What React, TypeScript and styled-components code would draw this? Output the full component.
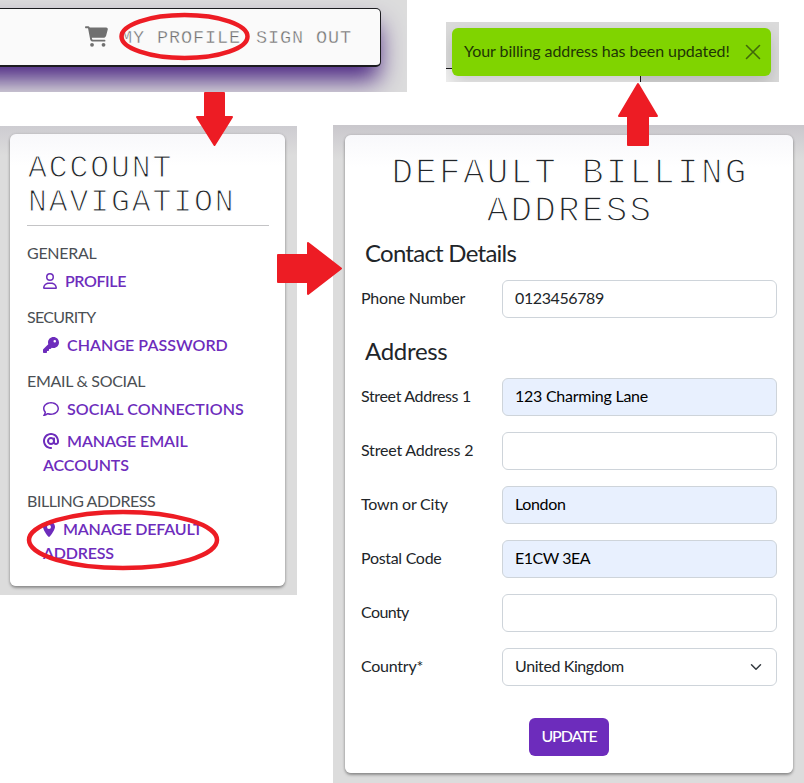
import React from "react";
import styled, { createGlobalStyle } from "styled-components";
import {
  FaAt,
  FaCartShopping,
  FaKey,
  FaLocationDot,
  FaRegComment,
  FaRegUser,
} from "react-icons/fa6";

const GlobalStyle = createGlobalStyle`
  * { box-sizing: border-box; }
  body {
    margin: 0;
    background: #fff;
    color: #212529;
    font: 400 16px/24px Lato, "Liberation Sans", sans-serif;
  }
  h1, h2, h3, p, ul { margin: 0; padding: 0; font-weight: 400; }
  ul { list-style: none; }
`;

const red = "#ed1c24";
const purple = "#6d2cbc";

const Page = styled.main`
  position: relative;
  width: 804px;
  height: 783px;
  overflow: hidden;
`;

const TopRow = styled.div`
  display: flex;
  gap: 39px;
  height: 92px;
`;

const BottomRow = styled.div`
  display: flex;
  align-items: flex-start;
  gap: 36px;
  padding-top: 33px;
`;

const HeaderPanel = styled.header`
  width: 407px;
  height: 92px;
  padding-top: 8px;
  background: #dcdcdc;
  overflow: hidden;
`;

const NavBar = styled.nav`
  display: flex;
  align-items: center;
  justify-content: flex-end;
  width: 421px;
  height: 59px;
  margin-left: -40px;
  padding-right: 28px;
  color: #707070;
  background: #fafafa;
  border: 1px solid #1c1c20;
  border-width: 1px 1px 2px 0;
  border-radius: 0 5px 5px 0;
  box-shadow: 0 15px 24px -2px #4b2683;
`;

const CartIcon = styled(FaCartShopping)`
  width: 23px;
  height: 21px;
  margin: 0 13px 2px 0;
`;

const NavLink = styled.a`
  padding-top: 4px;
  font: 18.5px/24px "Liberation Mono", monospace;
  letter-spacing: 0.9px;
  -webkit-text-stroke: 0.4px #fafafa;
  & + & { margin-left: 15px; }
`;

const ToastPanel = styled.div`
  width: 333px;
  height: 60px;
  margin-top: 22px;
  padding: 6px;
  overflow: hidden;
  background:
    linear-gradient(#18181b, #18181b) 0 46px / 194px 1px no-repeat,
    linear-gradient(#18181b, #18181b) 194px 46px / 1px 14px no-repeat,
    linear-gradient(#f1f1f1, #f1f1f1) 0 47px / 194px 13px no-repeat,
    #dadada;
`;

const Toast = styled.div`
  display: flex;
  align-items: center;
  justify-content: space-between;
  width: 319px;
  height: 48px;
  padding: 0 10px 0 12px;
  color: #203506;
  background: #80d400;
  border-radius: 6px;
  box-shadow: 0 8px 16px rgba(0, 0, 0, 0.15);
`;

const ToastText = styled.p`
  padding-bottom: 2px;
  white-space: nowrap;
  letter-spacing: -0.06px;
`;

const Sidebar = styled.aside`
  width: 297px;
  height: 469px;
  margin-top: 1px;
  padding: 8px 12px 9px 10px;
  background: linear-gradient(#cdccd1, #dcdcdc 30px);
`;

const Card = styled.section`
  height: 100%;
  border-radius: 6px;
  background: linear-gradient(#f8f8fb, #fff 32px);
  box-shadow: 0 2px 3px rgba(0, 0, 0, 0.34), 0 0 3px rgba(0, 0, 0, 0.12);
`;

const NavCard = styled(Card)`
  padding: 18px 16px 0 17px;
`;

const SidebarTitle = styled.h2`
  padding-left: 1px;
  font: 31.5px/34px "Liberation Mono", monospace;
  letter-spacing: 1.85px;
  white-space: nowrap;
  -webkit-text-stroke: 1.15px #fff;
`;

const Divider = styled.hr`
  height: 1px;
  margin: 5px 0 15px;
  border: 0;
  background: #c4c4c6;
`;

const Group = styled.section`
  margin-bottom: 8px;
`;

const GroupLabel = styled.h3<{ $track: number }>`
  color: #4b4f54;
  font-size: 16px;
  line-height: 24px;
  letter-spacing: ${(p) => p.$track}px;
`;

const GroupItem = styled.li<{ $track: number; $gap: number; $icon: number }>`
  padding: 4px 0 4px 16px;
  color: ${purple};
  font-weight: 600;
  letter-spacing: ${(p) => p.$track}px;
  svg {
    width: ${(p) => p.$icon}px;
    height: 16px;
    margin-right: ${(p) => p.$gap}px;
    vertical-align: -2px;
  }
`;

const FormPanel = styled.div`
  width: 471px;
  height: 658px;
  padding: 10px 11px 10px 12px;
  background: linear-gradient(#c9c7cc, #dcdcdc 34px);
`;

const FormCard = styled(Card)`
  display: flex;
  flex-direction: column;
  padding: 20px 16px 0;
`;

const FormTitle = styled.h1`
  padding-left: 2px;
  text-align: center;
  font: 36px/38px "Liberation Mono", monospace;
  letter-spacing: 2.2px;
  -webkit-text-stroke: 1.4px #fff;
`;

const SectionTitle = styled.h2<{ $top: number; $track: number }>`
  margin: ${(p) => p.$top}px 0 13px 4px;
  font-size: 24px;
  line-height: 29px;
  letter-spacing: ${(p) => p.$track}px;
`;

const Field = styled.label`
  display: grid;
  grid-template-columns: 141px 275px;
  align-items: center;
  height: 38px;
  margin-bottom: 16px;
`;

const FieldLabel = styled.span<{ $track: number }>`
  padding-bottom: 2px;
  letter-spacing: ${(p) => p.$track}px;
`;

const Control = styled.span<{ $filled?: boolean; $track?: number }>`
  display: flex;
  align-items: center;
  justify-content: space-between;
  height: 38px;
  padding: 0 12px 2px;
  border: 1px solid #ced4da;
  border-radius: 6px;
  color: ${(p) => (p.$filled ? "#000" : "#212529")};
  background: ${(p) => (p.$filled ? "#e8f0fe" : "#fff")};
  letter-spacing: ${(p) => p.$track ?? 0}px;
`;

const Chevron = styled.svg`
  margin-top: 2px;
`;

const UpdateButton = styled.button`
  align-self: center;
  width: 80px;
  height: 38px;
  margin-top: 16px;
  padding: 0 0 2px;
  color: #fff;
  background: ${purple};
  border: 0;
  border-radius: 6px;
  font: 500 16px/24px Lato, sans-serif;
  letter-spacing: -1.1px;
`;

const Annotations = styled.svg`
  position: absolute;
  inset: 0;
  pointer-events: none;
`;

const groups = [
  { label: "GENERAL", track: -0.3, items: [{ icon: <FaRegUser />, width: 14, text: "PROFILE", track: -0.4, gap: 8 }] },
  { label: "SECURITY", track: -0.7, items: [{ icon: <FaKey />, width: 16, text: "CHANGE PASSWORD", track: 0.05, gap: 8 }] },
  {
    label: "EMAIL & SOCIAL",
    track: -0.3,
    items: [
      { icon: <FaRegComment />, width: 16, text: "SOCIAL CONNECTIONS", track: 0.1, gap: 8 },
      { icon: <FaAt />, width: 16, text: "MANAGE EMAIL ACCOUNTS", track: -0.1, gap: 8 },
    ],
  },
  {
    label: "BILLING ADDRESS",
    track: -0.45,
    items: [{ icon: <FaLocationDot />, width: 12, text: "MANAGE DEFAULT ADDRESS", track: -0.2, gap: 8 }],
  },
];

const addressFields = [
  { label: "Street Address 1", track: -0.35, value: "123 Charming Lane", vTrack: -0.25, filled: true },
  { label: "Street Address 2", track: -0.2, value: "", vTrack: 0, filled: false },
  { label: "Town or City", track: -0.2, value: "London", vTrack: -0.35, filled: true },
  { label: "Postal Code", track: -0.3, value: "E1CW 3EA", vTrack: -0.5, filled: true },
  { label: "County", track: -0.6, value: "", vTrack: 0, filled: false },
];

export default function App() {
  return (
    <Page>
      <GlobalStyle />
      <TopRow>
        <HeaderPanel>
          <NavBar>
            <CartIcon />
            <NavLink>MY PROFILE</NavLink>
            <NavLink>SIGN OUT</NavLink>
          </NavBar>
        </HeaderPanel>
        <ToastPanel>
          <Toast>
            <ToastText>Your billing address has been updated!</ToastText>
            <svg width="16" height="16" viewBox="0 0 16 16" stroke="#40690a" strokeWidth="1.6" strokeLinecap="round">
              <path d="M1.5 1.5l13 13M14.5 1.5l-13 13" />
            </svg>
          </Toast>
        </ToastPanel>
      </TopRow>
      <BottomRow>
        <Sidebar>
          <NavCard>
            <SidebarTitle>
              ACCOUNT
              <br />
              NAVIGATION
            </SidebarTitle>
            <Divider />
            {groups.map((group) => (
              <Group key={group.label}>
                <GroupLabel $track={group.track}>{group.label}</GroupLabel>
                <ul>
                  {group.items.map((item) => (
                    <GroupItem key={item.text} $track={item.track} $gap={item.gap} $icon={item.width}>
                      {item.icon}
                      {item.text}
                    </GroupItem>
                  ))}
                </ul>
              </Group>
            ))}
          </NavCard>
        </Sidebar>
        <FormPanel>
          <FormCard>
            <FormTitle>
              DEFAULT BILLING
              <br />
              ADDRESS
            </FormTitle>
            <SectionTitle $top={7} $track={-0.75}>Contact Details</SectionTitle>
            <Field>
              <FieldLabel $track={-0.2}>Phone Number</FieldLabel>
              <Control $track={-0.4}>0123456789</Control>
            </Field>
            <SectionTitle $top={2} $track={-0.3}>Address</SectionTitle>
            {addressFields.map((field) => (
              <Field key={field.label}>
                <FieldLabel $track={field.track}>{field.label}</FieldLabel>
                <Control $filled={field.filled} $track={field.vTrack}>{field.value}</Control>
              </Field>
            ))}
            <Field>
              <FieldLabel $track={-0.25}>Country*</FieldLabel>
              <Control $track={-0.4}>
                United Kingdom
                <Chevron width="16" height="12" viewBox="0 0 16 16" fill="none" stroke="#343a40" strokeWidth="2" strokeLinecap="round" strokeLinejoin="round">
                  <path d="m2 5 6 6 6-6" />
                </Chevron>
              </Control>
            </Field>
            <UpdateButton>UPDATE</UpdateButton>
          </FormCard>
        </FormPanel>
      </BottomRow>
      <Annotations width="804" height="783" viewBox="0 0 804 783">
        <g fill="none" stroke={red} strokeWidth="4.5">
          <ellipse cx="184.5" cy="36.5" rx="63" ry="21.5" />
          <ellipse cx="123" cy="540" rx="94" ry="28" />
        </g>
        <g fill={red} stroke={red} strokeWidth="2" strokeLinejoin="round">
          <path d="M205 93h19v24h8l-17.500 28-17.500-28h8z" />
          <path d="M278 255h30v-12l33 25.500-33 25.500v-12h-30z" />
          <path d="M628 145v-29h-9l19-32 19 32h-9v29z" />
        </g>
      </Annotations>
    </Page>
  );
}
